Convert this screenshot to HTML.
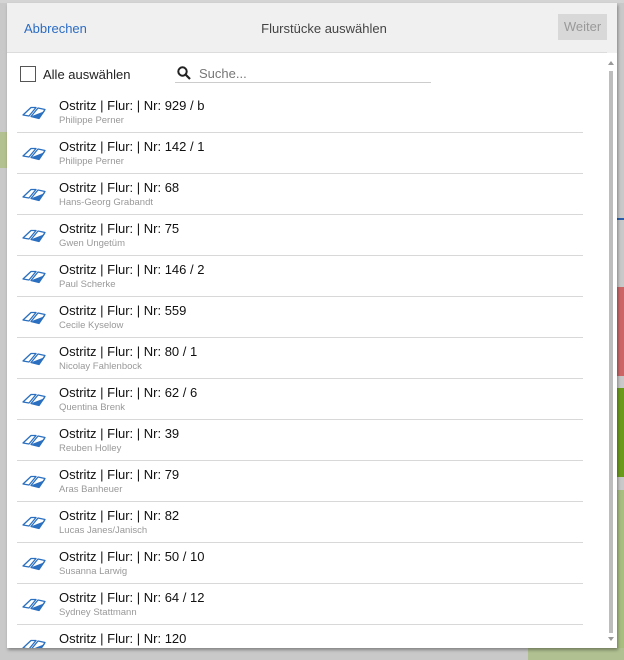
<!DOCTYPE html>
<html><head><meta charset="utf-8"><style>
*{box-sizing:border-box;margin:0;padding:0}
body{width:624px;height:660px;overflow:hidden;background:#c6c6c6;font-family:"Liberation Sans",sans-serif;position:relative}
.bg{position:absolute}
.dlg{position:absolute;left:7px;top:3px;width:610px;height:645px;background:#fff;box-shadow:1px 2px 3px rgba(0,0,0,.35);overflow:hidden}
.hdr{height:50px;background:#f0f0f0;position:relative}
.hdr .ln{position:absolute;left:0;width:600px;bottom:0;height:1px;background:#dcdcdc}
.hdr .a{position:absolute;left:17px;top:18px;font-size:13px;color:#2b6cc4}
.hdr .t{position:absolute;left:24px;right:0;top:18px;text-align:center;font-size:13px;color:#444}
.hdr .w{position:absolute;right:10px;top:11px;width:49px;height:26px;background:#d8d8d8;color:#999;font-size:13px;line-height:26px;text-align:center}
.tools{position:absolute;top:63px;left:13px;font-size:13px;color:#222}
.cb{position:absolute;left:0;top:0;width:16px;height:16px;border:1px solid #555}
.row{position:absolute;left:10px;width:566px;height:41px;border-bottom:1px solid #d8d8d8}
.row svg{position:absolute;left:4px;top:11px}
.row .m{position:absolute;left:42px;top:6px;font-size:13px;color:#111}
.row .s{position:absolute;left:42px;top:23px;font-size:9.5px;color:#999}
.sb{position:absolute;left:602px;top:68px;width:4px;height:562px;background:#bdbdbd}
</style></head><body>
<div class="bg" style="left:0;top:0;width:624px;height:660px;background:#c9c9c9"></div>
<div class="bg" style="left:0;top:132px;width:7px;height:36px;background:#b3c08f"></div>
<div class="bg" style="left:0;top:0;width:624px;height:3px;background:#d4d4d4"></div>
<div class="bg" style="left:617px;top:218px;width:7px;height:2px;background:#2b5fa8"></div>
<div class="bg" style="left:617px;top:287px;width:7px;height:89px;background:#c66"></div>
<div class="bg" style="left:617px;top:388px;width:7px;height:89px;background:#6a9a1a"></div>
<div class="bg" style="left:617px;top:490px;width:7px;height:170px;background:#a8bd80"></div>
<div class="bg" style="left:528px;top:648px;width:96px;height:12px;background:#b0c090"></div>
<div class="dlg">
<div class="hdr"><div class="ln"></div><span class="a">Abbrechen</span><div class="t">Flurstücke auswählen</div><div class="w">Weiter</div></div>
<div class="tools"><div class="cb"></div><span style="position:absolute;left:23px;top:1px;white-space:nowrap">Alle auswählen</span></div>
<svg style="position:absolute;left:170px;top:63px" width="14" height="14" viewBox="0 0 14 14"><circle cx="5.5" cy="5.5" r="4.2" fill="none" stroke="#222" stroke-width="2"/><path d="M8.5 8.5L13 13" stroke="#222" stroke-width="2.2"/></svg>
<span style="position:absolute;left:192px;top:63px;font-size:13px;color:#777">Suche...</span>
<div style="position:absolute;left:168px;top:79px;width:256px;height:1px;background:#ccc"></div>
<div class="sb"></div>
<div style="position:absolute;left:601px;top:58px;width:0;height:0;border:3px solid transparent;border-bottom:4px solid #999;border-top:0"></div>
<div style="position:absolute;left:601px;top:634px;width:0;height:0;border:3px solid transparent;border-top:4px solid #999;border-bottom:0"></div>
<div id="list"></div>
</div>
<script>
var d=[["929 / b","Philippe Perner"],["142 / 1","Philippe Perner"],["68","Hans-Georg Grabandt"],["75","Gwen Ungetüm"],["146 / 2","Paul Scherke"],["559","Cecile Kyselow"],["80 / 1","Nicolay Fahlenbock"],["62 / 6","Quentina Brenk"],["39","Reuben Holley"],["79","Aras Banheuer"],["82","Lucas Janes/Janisch"],["50 / 10","Susanna Larwig"],["64 / 12","Sydney Stattmann"],["120",""]];
var ic='<svg width="28" height="18" viewBox="0 0 28 18"><path d="M2 12L10 4.5h5L8 13z" fill="none" stroke="#2a6fc0" stroke-width="1.3" stroke-linejoin="round"/><path d="M10 13.5L17 5l7 1.5-6 9z" fill="none" stroke="#2a6fc0" stroke-width="1.3" stroke-linejoin="round"/><path d="M11 13l13-5-6 8z" fill="#2a6fc0"/></svg>';
var h='';d.forEach(function(r,i){h+='<div class="row" style="top:'+(89+i*41)+'px">'+ic+'<div class="m">Ostritz | Flur: | Nr: '+r[0]+'</div><div class="s">'+r[1]+'</div></div>'});
document.getElementById('list').innerHTML=h;
</script>
</body></html>
